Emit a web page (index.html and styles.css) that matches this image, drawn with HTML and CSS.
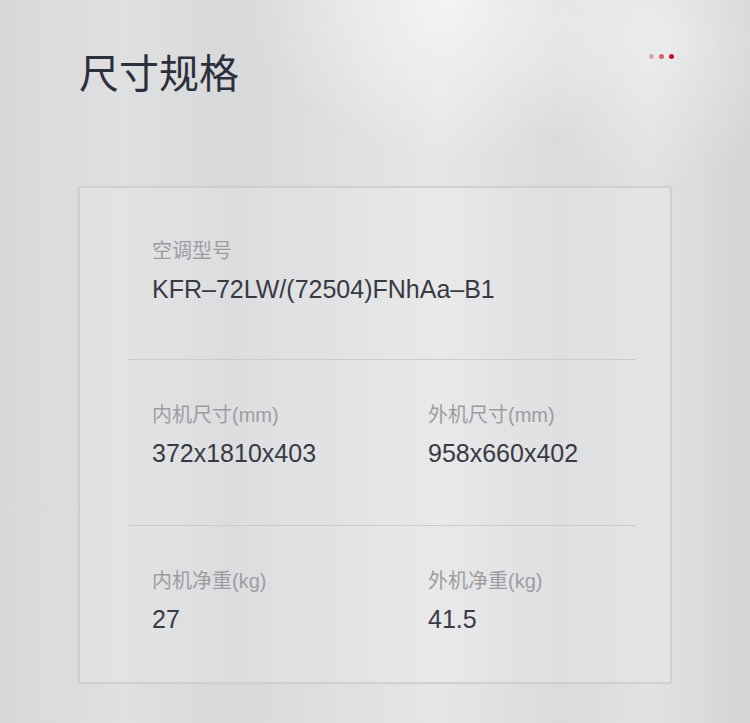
FILE: index.html
```html
<!DOCTYPE html>
<html lang="zh-CN">
<head>
<meta charset="utf-8">
<title>尺寸规格</title>
<link rel="stylesheet" href="styles.css">
</head>
<body>
<div class="page">
  <header class="header">
    <h1 class="title">尺寸规格</h1>
    <div class="dots">
      <span class="dot dot-1"></span>
      <span class="dot dot-2"></span>
      <span class="dot dot-3"></span>
    </div>
  </header>
  <section class="card">
    <div class="row row-first">
      <div class="item item-wide">
        <div class="label">空调型号</div>
        <div class="value">KFR‒72LW/(72504)FNhAa‒B1</div>
      </div>
    </div>
    <hr class="divider">
    <div class="row row-mid">
      <div class="item">
        <div class="label">内机尺寸(mm)</div>
        <div class="value">372x1810x403</div>
      </div>
      <div class="item">
        <div class="label">外机尺寸(mm)</div>
        <div class="value">958x660x402</div>
      </div>
    </div>
    <hr class="divider">
    <div class="row row-last">
      <div class="item">
        <div class="label">内机净重(kg)</div>
        <div class="value">27</div>
      </div>
      <div class="item">
        <div class="label">外机净重(kg)</div>
        <div class="value">41.5</div>
      </div>
    </div>
  </section>
</div>
</body>
</html>
```
FILE: styles.css
```css
html, body {
  margin: 0;
  padding: 0;
}
body {
  width: 750px;
  height: 723px;
  overflow: hidden;
  font-family: "Liberation Sans", "Noto Sans CJK SC", sans-serif;
  background:
    radial-gradient(ellipse 200px 160px at 450px 0px, rgba(255,255,255,0.55), rgba(255,255,255,0) 100%),
    radial-gradient(ellipse 160px 140px at 660px 40px, rgba(255,255,255,0.35), rgba(255,255,255,0) 100%),
    linear-gradient(to right,
      #d7d8da 0px,
      #dfe0e1 120px,
      #d8d9db 230px,
      #dedfe0 330px,
      #e6e6e7 440px,
      #dadbdd 560px,
      #e1e2e3 650px,
      #d3d4d6 750px);
}
.page {
  width: 750px;
  height: 723px;
}
.header {
  display: flex;
  justify-content: space-between;
  align-items: flex-start;
  padding: 51px 76px 0 79px;
}
.title {
  margin: 0;
  font-family: "Noto Sans CJK SC", sans-serif;
  font-weight: 400;
  font-size: 40px;
  line-height: 40px;
  color: #2c303c;
}
.dots {
  display: flex;
  gap: 5px;
  padding-top: 3px;
}
.dot {
  width: 5px;
  height: 5px;
  border-radius: 50%;
}
.dot-1 { background: #dba8b0; }
.dot-2 { background: #d2626f; }
.dot-3 { background: #c6101f; }

.card {
  box-sizing: border-box;
  width: 594px;
  margin: 95px 0 0 78px;
  border: 2px solid rgba(198, 199, 203, 0.7);
  border-radius: 3px;
  background: rgba(255, 255, 255, 0.12);
  box-shadow: 0 0 3px rgba(0, 0, 0, 0.04);
}
.row {
  display: grid;
  grid-template-columns: 276px 1fr;
  padding: 40px 0 55px 72px;
}
.row-first {
  padding-top: 48px;
}
.row-mid {
  padding-top: 40px;
  padding-bottom: 57px;
}
.row-last {
  padding-top: 40px;
  padding-bottom: 48px;
}
.item {
  display: flex;
  flex-direction: column;
  gap: 8px;
}
.item-wide {
  grid-column: 1 / -1;
}
.label {
  font-size: 20px;
  line-height: 30px;
  color: #9c9da1;
  white-space: nowrap;
}
.value {
  font-size: 25px;
  line-height: 30px;
  color: #383a43;
  white-space: nowrap;
}
.divider {
  margin: 0 34px 0 48px;
  border: 0;
  height: 1px;
  background: #cbccd0;
}
```
